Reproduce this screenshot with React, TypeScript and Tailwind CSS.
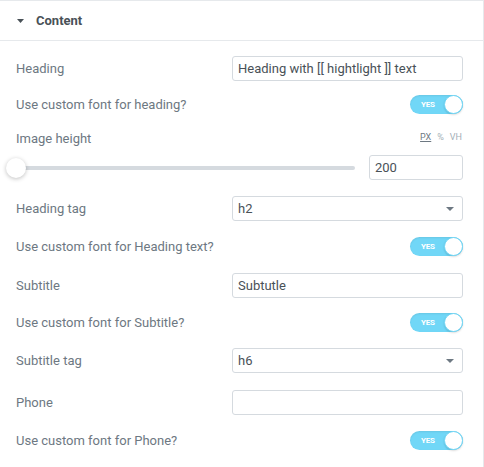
import React from 'react'

const font = { fontFamily: 'Roboto, "Liberation Sans", Arial, sans-serif' }

function Label({ children }: { children: React.ReactNode }) {
  return <span className="text-[13px] text-[#6d7882] leading-none">{children}</span>
}

function TextBox({ value, w = 'w-[231px]' }: { value?: string; w?: string }) {
  return (
    <div
      className={`${w} h-[25px] rounded-[3px] border border-[#d5dadf] bg-white flex items-center px-[5px] text-[13px] text-[#495157]`}
    >
      {value}
    </div>
  )
}

function SelectBox({ value }: { value: string }) {
  return (
    <div className="w-[231px] h-[25px] rounded-[3px] border border-[#d5dadf] bg-white flex items-center justify-between pl-[5px] pr-[8px] text-[13px] text-[#495157]">
      <span>{value}</span>
      <svg width="8" height="4" viewBox="0 0 8 4">
        <path d="M0 0 L8 0 L4 4 Z" fill="#6d7882" />
      </svg>
    </div>
  )
}

function Switch() {
  return (
    <div className="w-[53px] h-[19px] rounded-full bg-[#71d7f7] flex items-center justify-between pl-[11px] pr-[1px] shadow-[inset_0_1px_2px_rgba(0,0,0,0.08)]">
      <span className="text-[8px] font-bold text-white tracking-tight">YES</span>
      <span className="w-[19px] h-[19px] -mr-[1px] rounded-full bg-white border border-[#71d7f7] shadow-[0_1px_2px_rgba(0,0,0,0.15)]" />
    </div>
  )
}

function Row({ label, children, mt }: { label: string; children: React.ReactNode; mt: string }) {
  return (
    <div className={`${mt} h-[25px] flex items-center justify-between`}>
      <Label>{label}</Label>
      {children}
    </div>
  )
}

export default function App() {
  return (
    <div className="w-[484px] h-[467px] bg-white overflow-hidden" style={font}>
      <div className="h-full border-t border-r border-[#e6e9ec]">
        <div className="h-[40px] border-b border-[#e6e9ec] flex items-center pl-[17px]">
          <svg width="7" height="4" viewBox="0 0 7 4" className="mr-[12px]">
            <path d="M0 0 L7 0 L3.5 4 Z" fill="#495157" />
          </svg>
          <span className="text-[13px] font-bold text-[#495157]">Content</span>
        </div>

        <div className="pl-[16px] pr-[20px]">
          <Row label="Heading" mt="mt-[15px]">
            <TextBox value="Heading with [[ hightlight ]] text" />
          </Row>
          <Row label="Use custom font for heading?" mt="mt-[11px]">
            <Switch />
          </Row>

          <div className="mt-[13px] h-[16px] flex items-center justify-between">
            <Label>Image height</Label>
            <div className="flex items-center gap-[6px] text-[9px] pr-[1px]">
              <span className="text-[#6d7882] underline">PX</span>
              <span className="text-[#a4afb7]">%</span>
              <span className="text-[#a4afb7]">VH</span>
            </div>
          </div>
          <div className="mt-[9px] h-[25px] flex items-center justify-between">
            <div className="relative w-[340px] h-[4px] ml-[-1px] rounded-full bg-[#d5dadf]">
              <span className="absolute left-[-9px] top-[-8px] w-[20px] h-[20px] rounded-full bg-white shadow-[0_1px_4px_rgba(0,0,0,0.25)]" />
            </div>
            <TextBox value="200" w="w-[94px]" />
          </div>

          <Row label="Heading tag" mt="mt-[16px]">
            <SelectBox value="h2" />
          </Row>
          <Row label="Use custom font for Heading text?" mt="mt-[13px]">
            <Switch />
          </Row>
          <Row label="Subtitle" mt="mt-[14px]">
            <TextBox value="Subtutle" />
          </Row>
          <Row label="Use custom font for Subtitle?" mt="mt-[12px]">
            <Switch />
          </Row>
          <Row label="Subtitle tag" mt="mt-[13px]">
            <SelectBox value="h6" />
          </Row>
          <Row label="Phone" mt="mt-[17px]">
            <TextBox />
          </Row>
          <Row label="Use custom font for Phone?" mt="mt-[13px]">
            <Switch />
          </Row>
        </div>
      </div>
    </div>
  )
}
